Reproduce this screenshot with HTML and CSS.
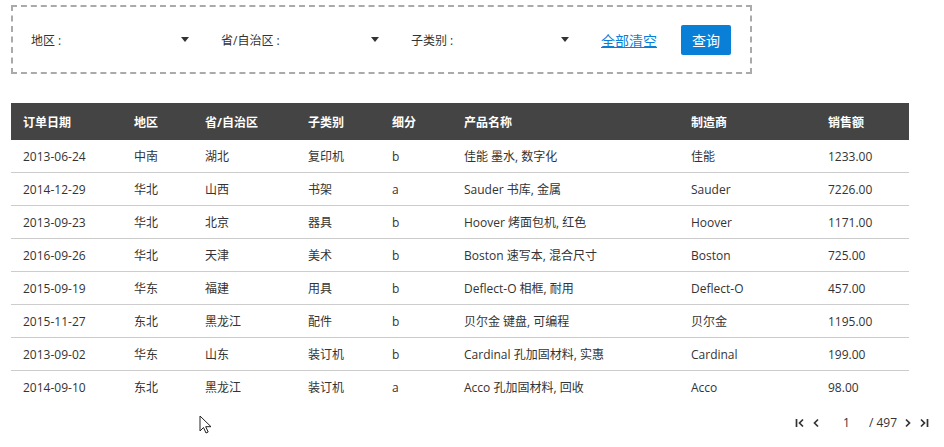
FILE: index.html
```html
<!DOCTYPE html>
<html lang="zh">
<head>
  <meta charset="UTF-8">
  <title>销售明细</title>
  <link rel="stylesheet" href="styles.css">
</head>
<body>
  <div class="filter-box">
    <div class="select"><span>地区&nbsp;:</span><i class="caret"></i></div>
    <div class="select"><span>省/自治区&nbsp;:</span><i class="caret"></i></div>
    <div class="select"><span>子类别&nbsp;:</span><i class="caret"></i></div>
    <a class="clear-link" href="#">全部清空</a>
    <button class="query-btn">查询</button>
  </div>

  <table class="data-table">
    <colgroup>
      <col style="width:111px"><col style="width:71px"><col style="width:103px"><col style="width:84px">
      <col style="width:72px"><col style="width:227px"><col style="width:137px"><col style="width:93px">
    </colgroup>
    <thead>
      <tr><th>订单日期</th><th>地区</th><th>省/自治区</th><th>子类别</th><th>细分</th><th>产品名称</th><th>制造商</th><th>销售额</th></tr>
    </thead>
    <tbody>
      <tr><td>2013-06-24</td><td>中南</td><td>湖北</td><td>复印机</td><td>b</td><td>佳能 墨水, 数字化</td><td>佳能</td><td>1233.00</td></tr>
      <tr><td>2014-12-29</td><td>华北</td><td>山西</td><td>书架</td><td>a</td><td>Sauder 书库, 金属</td><td>Sauder</td><td>7226.00</td></tr>
      <tr><td>2013-09-23</td><td>华北</td><td>北京</td><td>器具</td><td>b</td><td>Hoover 烤面包机, 红色</td><td>Hoover</td><td>1171.00</td></tr>
      <tr><td>2016-09-26</td><td>华北</td><td>天津</td><td>美术</td><td>b</td><td>Boston 速写本, 混合尺寸</td><td>Boston</td><td>725.00</td></tr>
      <tr><td>2015-09-19</td><td>华东</td><td>福建</td><td>用具</td><td>b</td><td>Deflect-O 相框, 耐用</td><td>Deflect-O</td><td>457.00</td></tr>
      <tr><td>2015-11-27</td><td>东北</td><td>黑龙江</td><td>配件</td><td>b</td><td>贝尔金 键盘, 可编程</td><td>贝尔金</td><td>1195.00</td></tr>
      <tr><td>2013-09-02</td><td>华东</td><td>山东</td><td>装订机</td><td>b</td><td>Cardinal 孔加固材料, 实惠</td><td>Cardinal</td><td>199.00</td></tr>
      <tr><td>2014-09-10</td><td>东北</td><td>黑龙江</td><td>装订机</td><td>a</td><td>Acco 孔加固材料, 回收</td><td>Acco</td><td>98.00</td></tr>
    </tbody>
  </table>

  <div class="pager">
    <svg width="10" height="10" viewBox="0 0 10 10"><path d="M1.5 1v8M8 1.5 4.5 5 8 8.5" fill="none" stroke="#333" stroke-width="1.7"/></svg>
    <svg width="8" height="10" viewBox="0 0 8 10"><path d="M6 1.5 2.5 5 6 8.5" fill="none" stroke="#333" stroke-width="1.7"/></svg>
    <span class="page-num">1</span>
    <span class="page-total">/ 497</span>
    <svg width="8" height="10" viewBox="0 0 8 10"><path d="M2 1.5 5.5 5 2 8.5" fill="none" stroke="#333" stroke-width="1.7"/></svg>
    <svg width="10" height="10" viewBox="0 0 10 10"><path d="M2 1.5 5.5 5 2 8.5M8.5 1v8" fill="none" stroke="#333" stroke-width="1.7"/></svg>
  </div>

  <!-- 鼠标指针 -->
  <svg class="cursor" width="14" height="20" viewBox="0 0 14 20"><path d="M1 1v15l3.5-3.5 2.5 5.5 2.2-1-2.5-5.3H12z" fill="#fff" stroke="#222" stroke-width="1"/></svg>
</body>
</html>
```

FILE: styles.css
```css
body {
  margin: 0;
  font-family: "Open Sans", "Noto Sans CJK SC", sans-serif;
  font-size: 12px;
  color: #333;
  background: #fff;
  position: relative;
  width: 944px;
  height: 447px;
  overflow: hidden;
}
.filter-box {
  margin: 5px 0 0 11px;
  width: 719px;
  height: 65px;
  border: 2px dashed #aaa;
  display: flex;
  align-items: center;
  padding-left: 18px;
}
.select {
  width: 160px;
  margin-right: 30px;
  display: flex;
  justify-content: space-between;
  align-items: center;
  color: #333;
}
.caret {
  width: 0;
  height: 0;
  border-left: 4px solid transparent;
  border-right: 4px solid transparent;
  border-top: 5px solid #333;
  margin-right: 2px;
}
.clear-link {
  color: #0a7fd8;
  text-decoration: underline;
  font-size: 14px;
  margin-right: 24px;
}
.query-btn {
  width: 50px;
  height: 30px;
  background-color: #0a7fd8;
  color: #fff;
  border: none;
  border-radius: 2px;
  font-family: inherit;
  font-size: 14px;
  padding: 0;
}
.data-table {
  margin: 29px 0 0 11px;
  width: 898px;
  border-collapse: collapse;
  table-layout: fixed;
}
.data-table th {
  background-color: #444;
  color: #fff;
  font-weight: bold;
  text-align: left;
  height: 37px;
  padding: 0 0 0 12px;
}
.data-table td {
  height: 32px;
  padding: 0 0 0 12px;
  border-bottom: 1px solid #ccc;
  white-space: nowrap;
}
.data-table tbody tr:last-child td {
  border-bottom: none;
}
.pager {
  display: flex;
  justify-content: flex-end;
  align-items: center;
  gap: 7px;
  margin: 11px 15px 0 0;
  color: #333;
}
.page-num {
  margin: 0 12px 0 16px;
}
.cursor {
  position: absolute;
  left: 199px;
  top: 415px;
}
```
